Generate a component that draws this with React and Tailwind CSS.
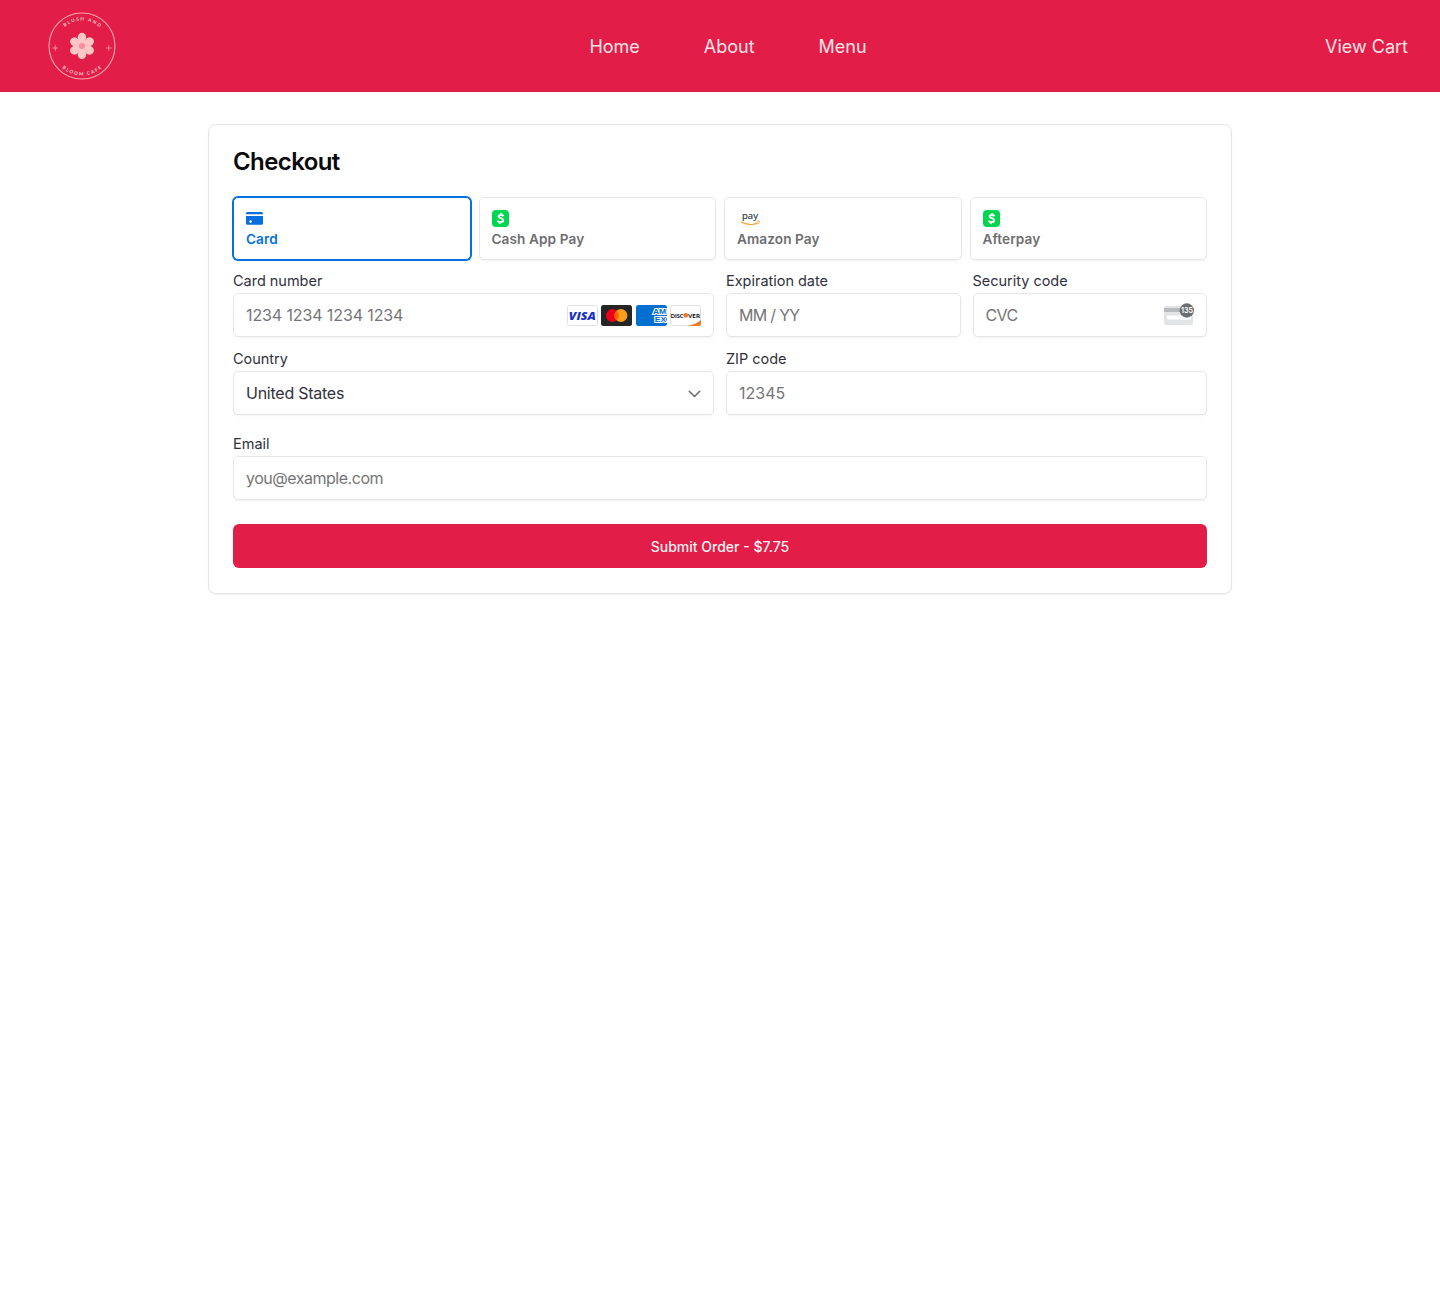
import React from "react";

const field =
  "flex h-[44.4px] items-center rounded-[5px] border border-[#e6e6e6] bg-white px-3 text-base text-[#757577] shadow-[0_1px_1px_rgba(0,0,0,0.03),0_3px_6px_rgba(0,0,0,0.02)]";

function Logo() {
  return (
    <svg className="size-[68px]" viewBox="0 0 68 68" fill="none">
      <defs>
        <path id="arcTop" d="M8.5 34a25.5 25.5 0 0 1 51 0" />
        <path id="arcBottom" d="M4.5 34a29.5 29.5 0 0 0 59 0" />
      </defs>
      <circle cx="34" cy="34" r="33" stroke="#f9a5ab" strokeWidth="1.100" />
      <g fill="#ffc6c6">
        {[0, 60, 120, 180, 240, 300].map((a) => (
          <ellipse key={a} cx="34" cy="25.500" rx="4.300" ry="4.700" transform={`rotate(${a} 34 34)`} />
        ))}
        <circle cx="34" cy="34" r="6.500" />
      </g>
      <circle cx="34" cy="34" r="3.100" fill="#f98f9c" />
      <path
        d="M7.300 33.300v5.400M4.600 36H10M60.700 33.300v5.400M58 36h5.400"
        stroke="#f9969f"
        strokeWidth="0.9"
      />
      <g fill="#fcc0c3" fontFamily="Lato, sans-serif" fontWeight="900" fontSize="4.700" letterSpacing="1.400">
        <text textAnchor="middle">
          <textPath href="#arcTop" startOffset="51%">BLUSH AND</textPath>
        </text>
        <text textAnchor="middle">
          <textPath href="#arcBottom" startOffset="50.500%">BLOOM CAFE</textPath>
        </text>
      </g>
    </svg>
  );
}

function CardIcon() {
  return (
    <svg className="h-[17px] w-[17px]" viewBox="0 0 17 17" fill="#0570de">
      <path d="M0 3.700C0 2.800.7 2.100 1.600 2.100h13.800c.9 0 1.600.7 1.600 1.600v.5H0z" />
      <path fillRule="evenodd" d="M0 6h17v7.200c0 .9-.7 1.600-1.600 1.600H1.600C.7 14.800 0 14.100 0 13.200zM4.600 10.300a1.300 1.300 0 1 0 0 2.600 1.300 1.300 0 0 0 0-2.600z" />
    </svg>
  );
}

function CashIcon() {
  return (
    <svg className="size-[17px]" viewBox="0 0 17 17" fill="none">
      <rect width="17" height="17" rx="4" fill="#00d64f" />
      <path
        d="M11.600 6.100C10.900 5.400 9.800 5 8.700 5c-1.200 0-2.100.5-2.100 1.450 0 2.100 4.500 1.300 4.500 3.700 0 1.250-1.250 1.950-2.700 1.950-1.300 0-2.300-.4-3.100-1.200M9.400 2.900 8.900 5M8.100 12l-.5 2.100"
        stroke="white"
        strokeWidth="2"
      />
    </svg>
  );
}

function AmazonIcon() {
  return (
    <svg className="h-[17px] w-[26px] overflow-visible" viewBox="0 0 26 17" fill="none">
      <rect x="0.500" y="0.500" width="25" height="16" rx="1.500" stroke="#f8f8f8" />
      <text x="5" y="8.600" fill="#26323e" stroke="#26323e" strokeWidth="0.150" fontFamily="Open Sans, sans-serif" fontWeight="500" fontSize="9.600" textLength="16" lengthAdjust="spacingAndGlyphs">pay</text>
      <path d="M4 11.800c5 3.300 12.500 3.500 17 .9" stroke="#f5a02f" strokeWidth="1.200" />
      <path d="M20 11.300c1-.4 2.200-.3 2.400 0 .1.500-.2 1.600-.9 2.300" stroke="#f5a02f" strokeWidth=".9" />
    </svg>
  );
}

function CardBrands() {
  return (
    <div className="ml-auto flex gap-[3.500px]">
      <svg className="h-[21px] w-[31px]" viewBox="0 0 31 21">
        <rect x=".5" y=".5" width="30" height="20" rx="2" fill="white" stroke="#dfe0e3" />
        <text x="1.800" y="14.500" fill="#1a34c4" fontFamily="Open Sans, sans-serif" fontWeight="800" fontStyle="italic" fontSize="11" textLength="27" lengthAdjust="spacingAndGlyphs">VISA</text>
      </svg>
      <svg className="h-[21px] w-[31px]" viewBox="0 0 31 21">
        <rect width="31" height="21" rx="2.500" fill="#252525" />
        <circle cx="11.400" cy="10.500" r="6.500" fill="#eb001b" />
        <circle cx="19.900" cy="10.500" r="6.500" fill="#f79e1b" />
        <path d="M15.650 5.580a6.500 6.500 0 0 1 0 9.840 6.500 6.500 0 0 1 0-9.840" fill="#ff5f00" />
      </svg>
      <svg className="h-[21px] w-[31px]" viewBox="0 0 31 21">
        <rect width="31" height="21" rx="2.500" fill="#016fd0" />
        <g fill="#016fd0" stroke="white" strokeWidth="1.800" paintOrder="stroke" fontFamily="Liberation Sans, sans-serif" fontWeight="700" fontSize="6.600">
          <text x="17" y="9.300" textLength="13.200" lengthAdjust="spacingAndGlyphs">AM</text>
          <text x="18.800" y="16.900" textLength="11.400" lengthAdjust="spacingAndGlyphs">EX</text>
        </g>
      </svg>
      <svg className="h-[21px] w-[31px]" viewBox="0 0 31 21">
        <rect x=".5" y=".5" width="30" height="20" rx="2" fill="white" stroke="#dfe0e3" />
        <path d="M31 15v4c0 1.100-.9 2-2 2H17c6-1 10.500-3.300 14-6" fill="#ed7b26" />
        <g fill="#16191c" fontFamily="Lato, sans-serif" fontWeight="900" fontSize="6.100">
          <text x=".8" y="12.500" textLength="12.700" lengthAdjust="spacingAndGlyphs">DISC</text>
          <text x="18" y="12.500" textLength="12" lengthAdjust="spacingAndGlyphs">VER</text>
        </g>
        <circle cx="15.800" cy="10.300" r="2.400" fill="#ed7b26" />
      </svg>
    </div>
  );
}

function CvcIcon() {
  return (
    <svg className="ml-auto h-[24px] w-[30px]" viewBox="0 0 30 24">
      <rect x="0" y="3" width="29" height="19" rx="2" fill="#e3e4e6" />
      <rect x="0" y="5" width="29" height="4" fill="#b9babd" />
      <rect x="3" y="12.500" width="24" height="4" rx="1" fill="white" />
      <circle cx="22.800" cy="7.500" r="7.200" fill="#6d6e70" />
      <text x="17" y="10.400" fill="white" fontFamily="Inter, sans-serif" fontWeight="600" fontSize="8" textLength="12" lengthAdjust="spacingAndGlyphs">135</text>
    </svg>
  );
}

function Tab({ icon, label, selected }) {
  return (
    <button
      className={
        "flex h-[63px] flex-col items-start rounded-[5px] bg-white px-3 pt-3 text-left " +
        (selected
          ? "border border-[#0570de] text-[#0570de] shadow-[0_0_0_1px_#0570de,0_1px_1px_rgba(0,0,0,0.03)]"
          : "border border-[#e6e6e6] text-[#6d6e70] shadow-[0_1px_1px_rgba(0,0,0,0.03),0_3px_6px_rgba(0,0,0,0.02)]")
      }
    >
      {icon}
      <span className="mt-1 text-[13.600px] leading-[17px] font-semibold tracking-[0.1px]">{label}</span>
    </button>
  );
}

function Field({ label, children, className = "" }) {
  return (
    <div className={className}>
      <div className="mb-[3.700px] pt-[0.300px] text-[14.500px] leading-[17.100px] tracking-[-0.020px] text-[#30313d]">{label}</div>
      <div className={field}>{children}</div>
    </div>
  );
}

export default function App() {
  return (
    <div className="min-h-screen bg-white font-['Inter',sans-serif]">
      <header className="grid h-[92px] grid-cols-[1fr_auto_1fr] items-center bg-[#e11d48] pr-8 pl-12 text-lg text-[#ffe4e6]">
        <Logo />
        <nav className="flex gap-16 pt-0.5">
          <a>Home</a>
          <a>About</a>
          <a>Menu</a>
        </nav>
        <a className="justify-self-end pt-0.5">View Cart</a>
      </header>
      <main className="mx-auto mt-8 h-[469.500px] w-[1024px] rounded-lg border border-[#e4e4e7] p-6 shadow-[0_1px_2px_rgba(0,0,0,0.06)]">
        <h1 className="pt-px text-2xl leading-6 font-semibold tracking-tight text-[#09090b]">Checkout</h1>
        <div className="mt-[23px] grid grid-cols-4 gap-2">
          <Tab selected icon={<CardIcon />} label="Card" />
          <Tab icon={<CashIcon />} label="Cash App Pay" />
          <Tab icon={<AmazonIcon />} label="Amazon Pay" />
          <Tab icon={<CashIcon />} label="Afterpay" />
        </div>
        <div className="mt-3 grid grid-cols-4 gap-3">
          <Field label="Card number" className="col-span-2">
            <span className="tracking-[-0.110px]">1234 1234 1234 1234</span>
            <CardBrands />
          </Field>
          <Field label="Expiration date">
            <span className="tracking-[-0.700px]">MM / YY</span>
          </Field>
          <Field label="Security code">
            <span className="tracking-[-0.600px]">CVC</span>
            <CvcIcon />
          </Field>
          <Field label="Country" className="col-span-2">
            <span className="tracking-[-0.250px] text-[#30313d]">United States</span>
            <svg className="mt-0.5 ml-auto h-3 w-[13px]" viewBox="0 0 13 12" fill="none">
              <path d="M1.300 3.300 6.500 8.500 11.700 3.300" stroke="#6d6e70" strokeWidth="1.600" strokeLinecap="round" strokeLinejoin="round" />
            </svg>
          </Field>
          <Field label="ZIP code" className="col-span-2">12345</Field>
        </div>
        <Field label="Email" className="mt-5">
          <span className="tracking-[-0.480px]">you@example.com</span>
        </Field>
        <button className="mt-6 flex h-11 w-full items-center justify-center rounded-md bg-[#e11d48] pt-0.5 text-sm font-medium text-[#fff1f2]">
          Submit Order - $7.75
        </button>
      </main>
    </div>
  );
}
